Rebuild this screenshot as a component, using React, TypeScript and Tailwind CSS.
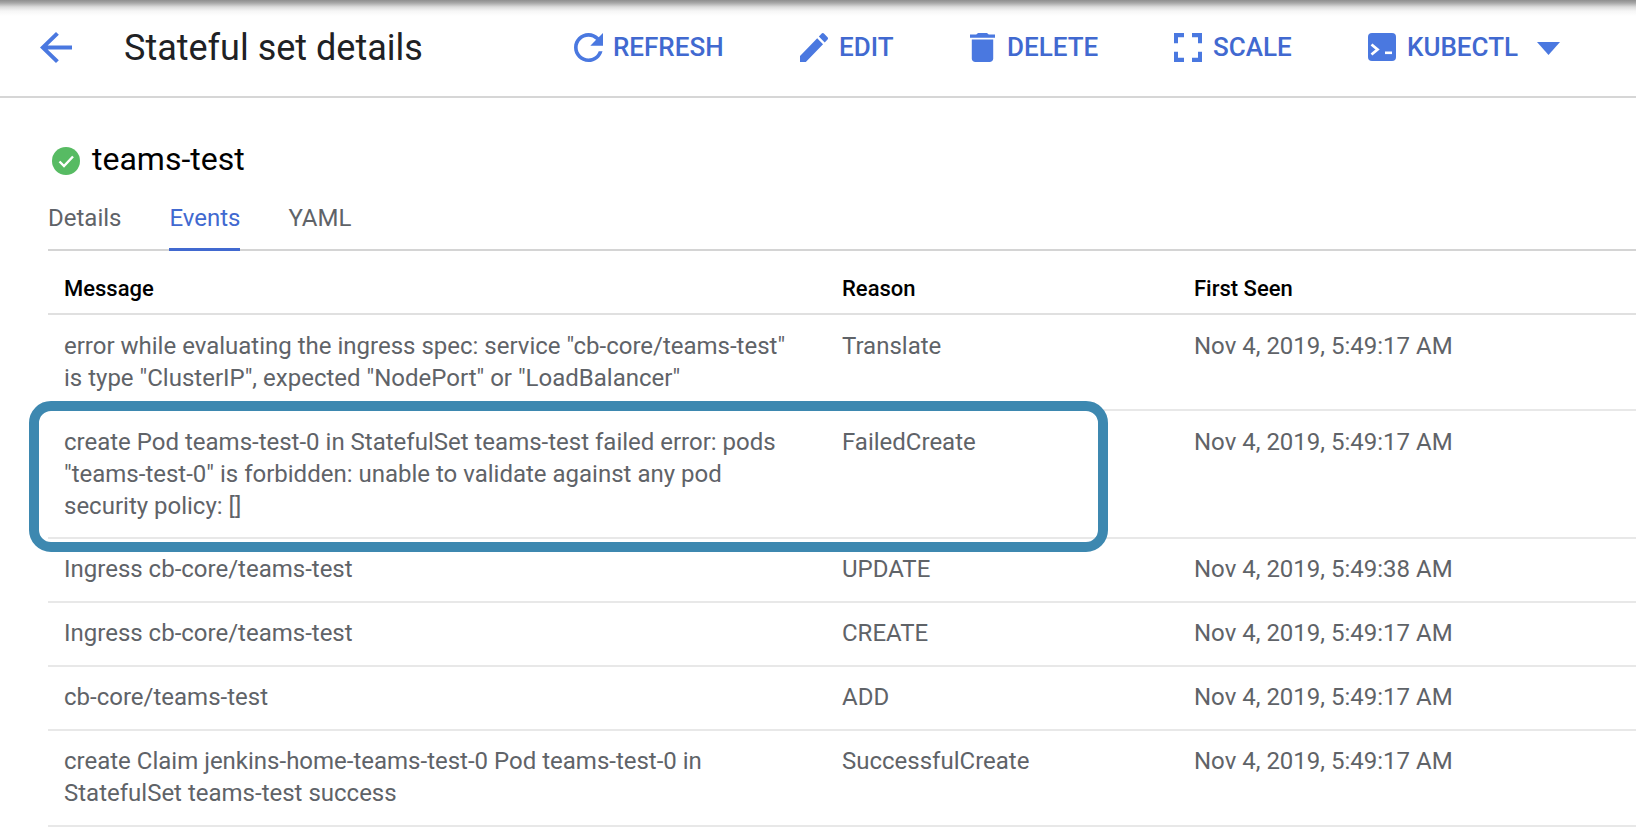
const BLUE = "#4a78e0";

function Icon({ d, box, w = 29, h = 29 }: { d: string; box: string; w?: number; h?: number }) {
  return (
    <svg width={w} height={h} viewBox={box} preserveAspectRatio="none" fill={BLUE} className="shrink-0">
      <path d={d} />
    </svg>
  );
}

const icons = {
  back: "M20 11H7.83l5.59-5.59L12 4l-8 8 8 8 1.41-1.41L7.83 13H20v-2z",
  refresh:
    "M17.65 6.35C16.2 4.9 14.21 4 12 4c-4.42 0-7.99 3.58-7.99 8s3.57 8 7.99 8c3.73 0 6.84-2.55 7.73-6h-2.08c-.82 2.33-3.04 4-5.65 4-3.31 0-6-2.69-6-6s2.69-6 6-6c1.66 0 3.14.69 4.22 1.78L13 11h7V4l-2.35 2.35z",
  edit: "M3 17.25V21h3.75L17.81 9.94l-3.75-3.75L3 17.25zM20.71 7.04c.39-.39.39-1.02 0-1.41l-2.34-2.34c-.39-.39-1.02-.39-1.41 0l-1.83 1.83 3.75 3.75 1.83-1.83z",
  trash: "M6 19c0 1.1.9 2 2 2h8c1.1 0 2-.9 2-2V7H6v12zM19 4h-3.5l-1-1h-5l-1 1H5v2h14V4z",
  scale: "M7 14H5v5h5v-2H7v-3zm-2-4h2V7h3V5H5v5zm12 7h-3v2h5v-5h-2v3zM14 5v2h3v3h2V5h-5z",
};

function Action({ icon, label, width, gap }: { icon: React.ReactNode; label: string; width: string; gap: string }) {
  return (
    <div className={`flex items-center ${gap} ${width}`}>
      {icon}
      <span className="text-[26px] font-medium text-[#4169d0] leading-none whitespace-nowrap">{label}</span>
    </div>
  );
}

const rows = [
  {
    h: "h-[96px] pt-[15px]",
    m: ['error while evaluating the ingress spec: service "cb-core/teams-test"', 'is type "ClusterIP", expected "NodePort" or "LoadBalancer"'],
    r: "Translate",
    t: "Nov 4, 2019, 5:49:17 AM",
  },
  {
    h: "h-[128px] pt-[15px]",
    m: ["create Pod teams-test-0 in StatefulSet teams-test failed error: pods", '"teams-test-0" is forbidden: unable to validate against any pod', "security policy: []"],
    r: "FailedCreate",
    t: "Nov 4, 2019, 5:49:17 AM",
  },
  { h: "h-[64px] pt-[14px]", m: ["Ingress cb-core/teams-test"], r: "UPDATE", t: "Nov 4, 2019, 5:49:38 AM" },
  { h: "h-[64px] pt-[14px]", m: ["Ingress cb-core/teams-test"], r: "CREATE", t: "Nov 4, 2019, 5:49:17 AM" },
  { h: "h-[64px] pt-[14px]", m: ["cb-core/teams-test"], r: "ADD", t: "Nov 4, 2019, 5:49:17 AM" },
  {
    h: "h-[96px] pt-[14px]",
    m: ["create Claim jenkins-home-teams-test-0 Pod teams-test-0 in", "StatefulSet teams-test success"],
    r: "SuccessfulCreate",
    t: "Nov 4, 2019, 5:49:17 AM",
  },
];

export default function App() {
  return (
    <div className="relative h-[832px] w-[1636px] overflow-hidden bg-white font-['Roboto',sans-serif]">
      <div className="h-[16px] bg-[linear-gradient(to_bottom,#8e8e8e_0px,#a8a8a8_3px,#dcdcdc_7px,#f6f6f6_11px,#ffffff_16px)]" />
      <header className="flex h-[82px] items-center border-b-2 border-[#d6d6d6] pb-[18px]">
        <div className="ml-[40px] w-[84px]">
          <Icon d={icons.back} box="4 4 16 16" w={32} h={31} />
        </div>
        <h1 className="mt-[2px] w-[450px] text-[36px] leading-none text-[#202124]">Stateful set details</h1>
        <Action width="w-[226px]" icon={<Icon d={icons.refresh} box="4 4 16 16" />} label="REFRESH" gap="gap-[10px]" />
        <Action width="w-[170px]" icon={<Icon d={icons.edit} box="3 3 18 18" w={28} />} label="EDIT" gap="gap-[11px]" />
        <Action width="w-[204px]" icon={<Icon d={icons.trash} box="5 3 14 18" w={25} />} label="DELETE" gap="gap-[12px]" />
        <Action width="w-[194px]" icon={<Icon d={icons.scale} box="5 5 14 14" w={28} />} label="SCALE" gap="gap-[11px]" />
        <Action
          width="w-[169px]"
          gap="gap-[11px]"
          icon={
            <svg width="28" height="28" viewBox="0 0 28 28" className="shrink-0">
              <rect width="28" height="28" rx="4" fill={BLUE} />
              <path d="M3.5 11.5l6 5-6 5" fill="none" stroke="#fff" strokeWidth="2.8" />
              <rect x="17" y="18.5" width="7" height="2.6" fill="#fff" />
            </svg>
          }
          label="KUBECTL"
        />
        <svg width="23" height="13" viewBox="0 0 23 13" className="mt-[2px]">
          <path d="M0 0h23L11.5 13z" fill={BLUE} />
        </svg>
      </header>

      <main className="pl-[48px]">
        <div className="mt-[45px] flex h-[32px] items-center">
          <svg width="28" height="28" viewBox="0 0 28 28" className="ml-[4px] mt-[4px] shrink-0">
            <circle cx="14" cy="14" r="14" fill="#57bb63" />
            <path d="M7.5 14.5l4.5 4.5 9-9.5" fill="none" stroke="#fff" strokeWidth="2.4" />
          </svg>
          <span className="ml-[12px] text-[32px] leading-none text-black">teams-test</span>
        </div>

        <nav className="mt-[20px] flex h-[56px] border-b-2 border-[#d4d4d4] text-[24px]">
          <div className="flex h-[56px] items-center pb-[11px] text-[#5f6368]">Details</div>
          <div className="ml-[48px] flex h-[56px] items-center border-b-[3px] border-[#4169d0] pb-[8px] text-[#4169d0]">Events</div>
          <div className="ml-[48px] flex h-[56px] items-center pb-[11px] text-[#5f6368]">YAML</div>
        </nav>

        <div className="flex h-[64px] items-center border-b-2 border-[#e0e0e0] pl-[16px] pt-[12px] text-[22px] font-medium text-black">
          <div className="w-[778px]">Message</div>
          <div className="w-[352px]">Reason</div>
          <div>First Seen</div>
        </div>

        {rows.map((row, i) => (
          <div key={i} className={`flex ${row.h} border-b-2 border-[#e8e8e8] pl-[16px] text-[24px] leading-[32px] text-[#5f6368]`}>
            <div className="w-[778px] whitespace-nowrap">
              {row.m.map((l) => (
                <div key={l}>{l}</div>
              ))}
            </div>
            <div className="w-[352px]">{row.r}</div>
            <div className="whitespace-nowrap">{row.t}</div>
          </div>
        ))}
      </main>

      <div className="absolute left-[29px] top-[401px] h-[151px] w-[1079px] rounded-[22px] border-[10px] border-[#3d88b0]" />
    </div>
  );
}
